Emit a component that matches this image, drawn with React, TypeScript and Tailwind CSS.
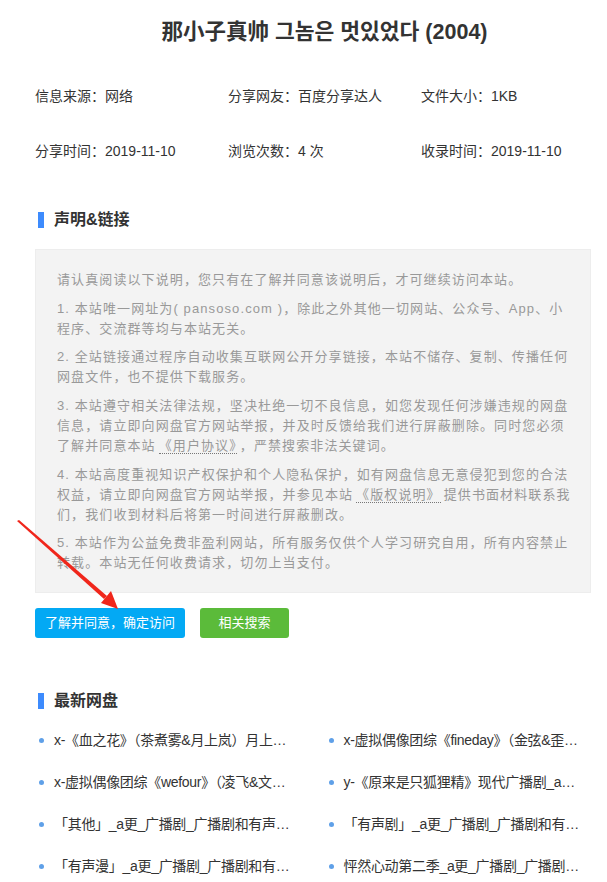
const infoItems = [
  ['信息来源', '网络'],
  ['分享网友', '百度分享达人'],
  ['文件大小', '1KB'],
  ['分享时间', '2019-11-10'],
  ['浏览次数', '4 次'],
  ['收录时间', '2019-11-10'],
]

const latest = [
  'x-《血之花》（茶煮雾&月上岚）月上…',
  'x-虚拟偶像团综《fineday》（金弦&歪…',
  'x-虚拟偶像团综《wefour》（凌飞&文…',
  'y-《原来是只狐狸精》现代广播剧_a…',
  '「其他」_a更_广播剧_广播剧和有声…',
  '「有声剧」_a更_广播剧_广播剧和有…',
  '「有声漫」_a更_广播剧_广播剧和有…',
  '怦然心动第二季_a更_广播剧_广播剧…',
]

function SectionTitle({ children }: { children: React.ReactNode }) {
  return (
    <div className="flex items-center h-[24px]">
      <span className="ml-[3px] w-[6px] h-[16px] bg-[#3d8bfd]" />
      <h2 className="ml-[10px] text-[16px] font-bold text-[#333] leading-[24px]">{children}</h2>
    </div>
  )
}

function Link({ children }: { children: React.ReactNode }) {
  return <span className="mx-[3px] border-b border-dotted border-[#777]">{children}</span>
}

export default function App() {
  return (
    <div
      className="relative min-h-[882px] w-full overflow-hidden bg-white"
      style={{ fontFamily: '"Liberation Sans", "Noto Sans CJK SC", "Noto Sans CJK KR", sans-serif' }}
    >
      <div className="ml-[35px] w-[579px] pt-[18px]">
        <h1 className="text-center text-[21.5px] font-bold leading-[28px] text-[#333]">
          那小子真帅 그놈은 멋있었다 (2004)
        </h1>

        {/* Info */}
        <div className="mt-[40px] grid grid-cols-3 gap-y-[35px] text-[14px] leading-[20px] text-[#333]">
          {infoItems.map(([label, value]) => (
            <div key={label}>
              {label}：{value}
            </div>
          ))}
        </div>

        {/* Statement */}
        <div className="mt-[47px]">
          <SectionTitle>声明&amp;链接</SectionTitle>
        </div>
        <div className="mt-[17px] w-[96%] border border-[#ededed] bg-[#f3f3f3] pl-[21px] pr-[10px] pt-[20px] pb-[19px] text-[13px] leading-[20px] tracking-[1.1px] text-[#999]">
          <p className="mb-[9px]">请认真阅读以下说明，您只有在了解并同意该说明后，才可继续访问本站。</p>
          <p className="mb-[8px]">
            1. 本站唯一网址为( pansoso.com )，除此之外其他一切网站、公众号、App、小
            <br />
            程序、交流群等均与本站无关。
          </p>
          <p className="mb-[9px]">
            2. 全站链接通过程序自动收集互联网公开分享链接，本站不储存、复制、传播任何
            <br />
            网盘文件，也不提供下载服务。
          </p>
          <p className="mb-[9px]">
            3. 本站遵守相关法律法规，坚决杜绝一切不良信息，如您发现任何涉嫌违规的网盘
            <br />
            信息，请立即向网盘官方网站举报，并及时反馈给我们进行屏蔽删除。同时您必须
            <br />
            了解并同意本站<Link>《用户协议》</Link>，严禁搜索非法关键词。
          </p>
          <p className="mb-[8px]">
            4. 本站高度重视知识产权保护和个人隐私保护，如有网盘信息无意侵犯到您的合法
            <br />
            权益，请立即向网盘官方网站举报，并参见本站<Link>《版权说明》</Link>提供书面材料联系我
            <br />
            们，我们收到材料后将第一时间进行屏蔽删改。
          </p>
          <p>
            5. 本站作为公益免费非盈利网站，所有服务仅供个人学习研究自用，所有内容禁止
            <br />
            转载。本站无任何收费请求，切勿上当支付。
          </p>
        </div>

        {/* Buttons */}
        <div className="mt-[15px] flex gap-[15px]">
          <button className="h-[30px] w-[150px] rounded-[3px] bg-[#03a9f4] text-[13px] text-white">
            了解并同意，确定访问
          </button>
          <button className="h-[30px] w-[89px] rounded-[3px] bg-[#5bbb3a] text-[13px] text-white">
            相关搜索
          </button>
        </div>

        {/* Latest */}
        <div className="mt-[51px]">
          <SectionTitle>最新网盘</SectionTitle>
        </div>
        <ul className="mt-[6px] grid grid-cols-2">
          {latest.map((t) => (
            <li key={t} className="flex h-[42px] items-center">
              <span className="ml-[4px] h-[5px] w-[5px] shrink-0 rounded-full bg-[#5fa0e8]" />
              <span className="ml-[10px] whitespace-nowrap text-[14px] tracking-[-0.3px] text-[#333]">{t}</span>
            </li>
          ))}
        </ul>
      </div>

      {/* red annotation arrow */}
      <svg className="pointer-events-none absolute left-0 top-0" width="607" height="882">
        <polygon points="17,521 19,520 107,596 104,599" fill="#f0261b" />
        <polygon points="118,609 101,603 111,591" fill="#f0261b" />
      </svg>
    </div>
  )
}
